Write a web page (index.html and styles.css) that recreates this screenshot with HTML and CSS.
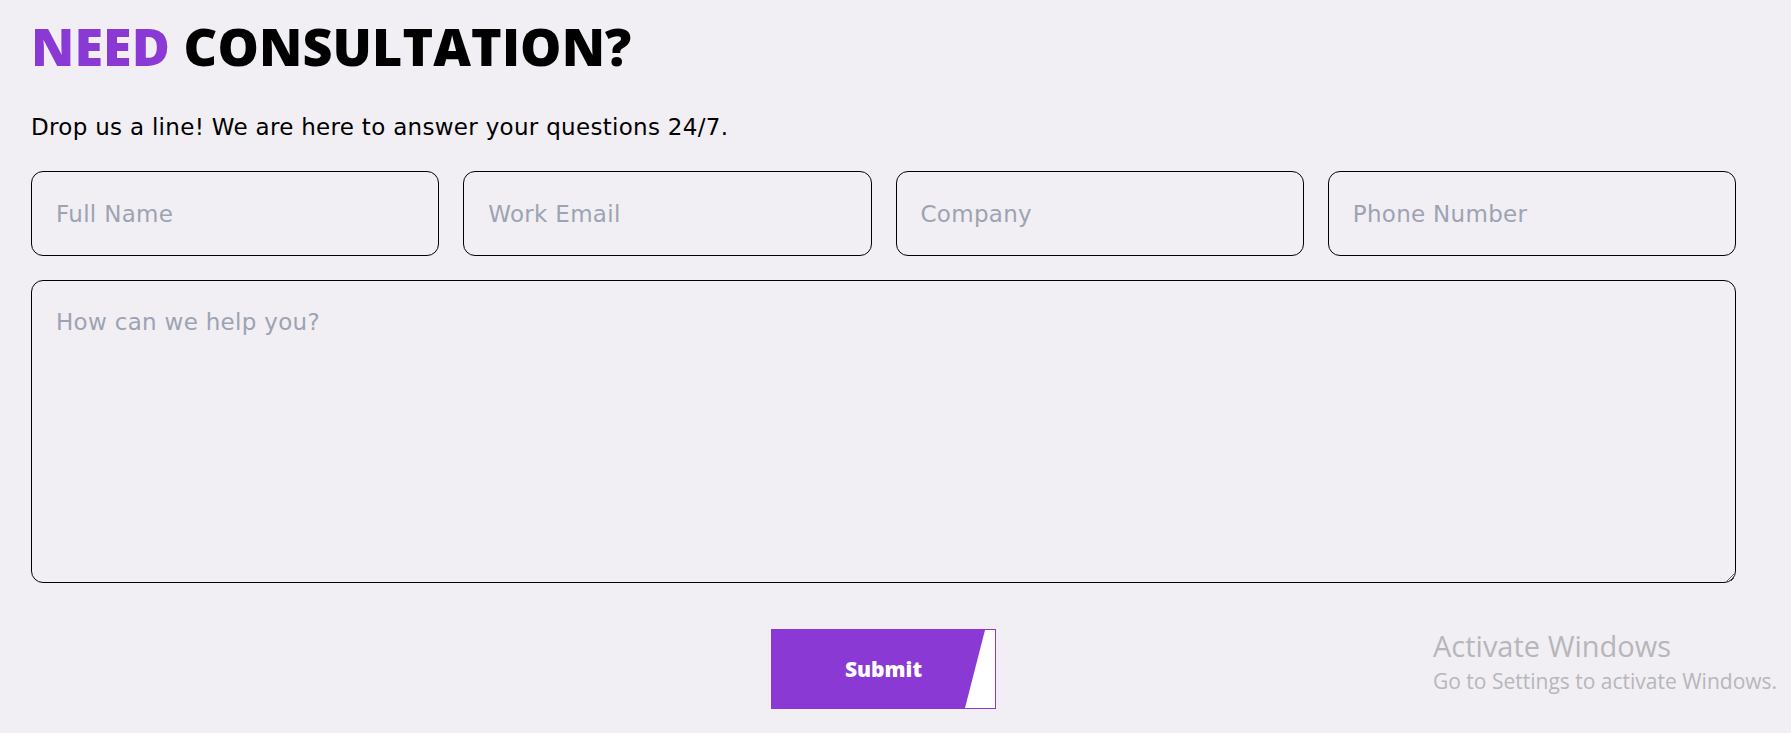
FILE: index.html
```html
<!DOCTYPE html>
<html lang="en">
<head>
<meta charset="utf-8">
<title>Need Consultation?</title>
<link rel="stylesheet" href="styles.css">
</head>
<body>
<main class="page">
  <section class="consult">
    <h1 class="title"><span class="accent">NEED</span> CONSULTATION?</h1>
    <p class="lead">Drop us a line! We are here to answer your questions 24/7.</p>
    <form class="form">
      <div class="row">
        <input class="field" type="text" placeholder="Full Name">
        <input class="field" type="email" placeholder="Work Email">
        <input class="field" type="text" placeholder="Company">
        <input class="field" type="tel" placeholder="Phone Number">
      </div>
      <textarea class="message" placeholder="How can we help you?"></textarea>
      <div class="actions">
        <button class="submit" type="button"><span class="submit-label">Submit</span></button>
      </div>
    </form>
  </section>
  <div class="watermark">
    <div class="wm-title">Activate Windows</div>
    <div class="wm-sub">Go to Settings to activate Windows.</div>
  </div>
</main>
</body>
</html>
```

FILE: styles.css
```css
* { box-sizing: border-box; }
html, body {
  margin: 0;
  padding: 0;
  background: #f1eff4;
}
body {
  font-family: "DejaVu Sans", "Open Sans", sans-serif;
  color: #000;
}
.page {
  width: 1791px;
  height: 733px;
  position: relative;
  overflow: hidden;
}
.consult {
  padding: 14px 0 0 31px;
  width: 1736px;
}
.title {
  margin: 0;
  font-family: "Open Sans", sans-serif;
  font-weight: 800;
  font-size: 52px;
  line-height: 64px;
  letter-spacing: 0.1px;
  color: #000;
}
.accent { color: #8a39d4; }
.lead {
  margin: 34px 0 0 0;
  font-family: "DejaVu Sans", sans-serif;
  font-size: 23px;
  line-height: 30px;
  letter-spacing: 0.3px;
}
.form {
  margin-top: 29px;
  display: flex;
  flex-direction: column;
  gap: 24px;
}
.row {
  display: grid;
  grid-template-columns: repeat(4, 1fr);
  gap: 24px;
}
.field, .message {
  font-family: "DejaVu Sans", sans-serif;
  font-size: 23px;
  letter-spacing: 0.3px;
  color: #333;
  background: transparent;
  border: 1px solid #000;
  border-radius: 12px;
  padding: 0 24px;
  outline: none;
}
.field {
  height: 85px;
}
.message {
  height: 303px;
  padding: 28px 24px 22px;
  resize: vertical;
}
.field::placeholder, .message::placeholder {
  color: #9da3b2;
  opacity: 1;
}
.actions {
  display: flex;
  justify-content: center;
  margin-top: 22px;
}
.submit {
  position: relative;
  width: 225px;
  height: 80px;
  background: #8a39d4;
  border: 1px solid #8a39d4;
  color: #fff;
  font-family: "Open Sans", sans-serif;
  font-weight: 800;
  font-size: 21px;
  cursor: pointer;
  padding: 0;
}
.submit::after {
  content: "";
  position: absolute;
  top: 0;
  right: 0;
  bottom: 0;
  width: 30px;
  background: #fff;
  clip-path: polygon(20px 0, 30px 0, 30px 100%, 0 100%);
}
.submit-label { position: relative; }
.watermark {
  position: absolute;
  left: 1433px;
  top: 627px;
  color: #b7b6bb;
  font-family: "Open Sans", sans-serif;
  pointer-events: none;
}
.wm-title {
  font-size: 29px;
  line-height: 37px;
}
.wm-sub {
  margin-top: 4px;
  font-size: 21px;
  line-height: 27px;
}
```
